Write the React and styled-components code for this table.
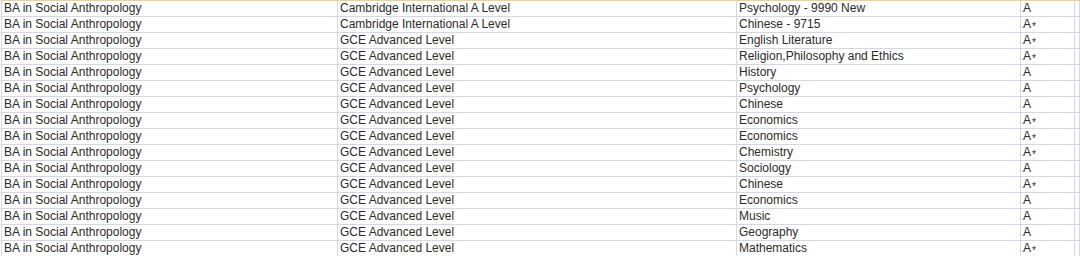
import React from 'react';
import styled, {createGlobalStyle} from 'styled-components';

const GlobalStyle = createGlobalStyle`
  html, body {
    margin: 0;
    padding: 0;
    background: #ffffff;
  }
`

const Sheet = styled.div`
  margin-left: 1px;
  border-left: 1px solid #d4d8e6;
  border-top: 1px solid #f4cf86;
  height: 255px;
  overflow: hidden;
  font-family: "Liberation Sans", Arial, sans-serif;
  font-size: 12px;
  color: #2b2b2b;
`

const Row = styled.div`
  display: grid;
  grid-template-columns: 336px 399px 284px 54px 1fr;
  height: 16px;
`

const Cell = styled.div`
  box-sizing: border-box;
  height: 16px;
  padding: 0 0 0 2px;
  line-height: 15px;
  border-right: 1px solid #d4d8e6;
  border-bottom: 1px solid #d4d8e6;
  white-space: nowrap;
  overflow: hidden;
`

const Star = styled.span`
  font-size: 10px;
  position: relative;
  top: 2px;
  margin-left: 1px;
`

const rows = [
    ['Cambridge International A Level', 'Psychology - 9990 New', 'A'],
    ['Cambridge International A Level', 'Chinese - 9715', 'A*'],
    ['GCE Advanced Level', 'English Literature', 'A*'],
    ['GCE Advanced Level', 'Religion,Philosophy and Ethics', 'A*'],
    ['GCE Advanced Level', 'History', 'A'],
    ['GCE Advanced Level', 'Psychology', 'A'],
    ['GCE Advanced Level', 'Chinese', 'A'],
    ['GCE Advanced Level', 'Economics', 'A*'],
    ['GCE Advanced Level', 'Economics', 'A*'],
    ['GCE Advanced Level', 'Chemistry', 'A*'],
    ['GCE Advanced Level', 'Sociology', 'A'],
    ['GCE Advanced Level', 'Chinese', 'A*'],
    ['GCE Advanced Level', 'Economics', 'A'],
    ['GCE Advanced Level', 'Music', 'A'],
    ['GCE Advanced Level', 'Geography', 'A'],
    ['GCE Advanced Level', 'Mathematics', 'A*'],
]

const Grade = ({value}) =>
    value.endsWith('*') ? <>A<Star>*</Star></> : value

const App = () => {
    return (
        <>
            <GlobalStyle/>
            <Sheet>
                {rows.map(([qual, subject, grade], i) =>
                    <Row key={i}>
                        <Cell>BA in Social Anthropology</Cell>
                        <Cell>{qual}</Cell>
                        <Cell>{subject}</Cell>
                        <Cell><Grade value={grade}/></Cell>
                        <Cell/>
                    </Row>)}
            </Sheet>
        </>
    );
};

export default App;
